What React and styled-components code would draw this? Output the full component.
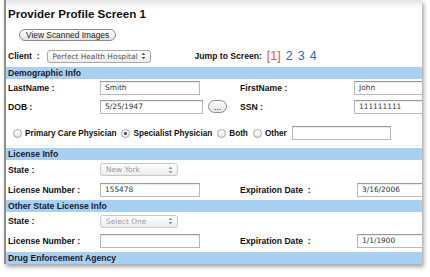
import React from "react";
import styled, { createGlobalStyle } from "styled-components";

const GlobalStyle = createGlobalStyle`
  html, body {
    margin: 0;
    padding: 0;
    background: #ffffff;
  }
  body {
    font-family: "Liberation Sans", Arial, sans-serif;
    color: #111;
  }
`;

export default function App() {
  return (
    <>
      <GlobalStyle />
      <Page>
        <Frame>
          <Header>
            <Title>Provider Profile Screen 1</Title>
            <PillButton wide>View Scanned Images</PillButton>
            <ClientRow>
              <Label>Client&nbsp;&nbsp;:</Label>
              <Select width="104px">Perfect Health Hospital</Select>
              <Jump>
                <Label>Jump to Screen:</Label>
                <ScreenLink current>[1]</ScreenLink>
                <ScreenLink>2</ScreenLink>
                <ScreenLink>3</ScreenLink>
                <ScreenLink>4</ScreenLink>
              </Jump>
            </ClientRow>
          </Header>

          <Bar>Demographic Info</Bar>
          <Row height="17px">
            <Label>LastName :</Label>
            <Input width="100px">Smith</Input>
            <Label>FirstName :</Label>
            <Input grow>John</Input>
          </Row>
          <Row height="21px">
            <Label>DOB :</Label>
            <Cell>
              <Input width="103px">5/25/1947</Input>
              <PillButton>...</PillButton>
            </Cell>
            <Label>SSN :</Label>
            <Input grow>111111111</Input>
          </Row>
          <RadioRow>
            <RadioItem>
              <Radio />
              Primary Care Physician
            </RadioItem>
            <RadioItem>
              <Radio checked />
              Specialist Physician
            </RadioItem>
            <RadioItem>
              <Radio />
              Both
            </RadioItem>
            <RadioItem>
              <Radio />
              Other
            </RadioItem>
            <Input width="99px" />
          </RadioRow>

          <Bar>License Info</Bar>
          <Row height="19px">
            <Label>State :</Label>
            <Select width="78px" disabled>
              New York
            </Select>
          </Row>
          <Row height="21px" wideLabel>
            <Label>License Number :</Label>
            <Input width="100px">155478</Input>
            <Label>Expiration Date&nbsp;&nbsp;:</Label>
            <Input grow>3/16/2006</Input>
          </Row>

          <Bar>Other State License Info</Bar>
          <Row height="18px">
            <Label>State :</Label>
            <Select width="78px" disabled>
              Select One
            </Select>
          </Row>
          <Row height="22px" wideLabel>
            <Label>License Number :</Label>
            <Input width="100px" />
            <Label>Expiration Date&nbsp;&nbsp;:</Label>
            <Input grow>1/1/1900</Input>
          </Row>

          <Bar>Drug Enforcement Agency</Bar>
        </Frame>
      </Page>
    </>
  );
}

function Select({ children, width, disabled }) {
  return (
    <SelectBox width={width} disabled={disabled}>
      <span>{children}</span>
      <svg width="5" height="8" viewBox="0 0 5 8">
        <path d="M0.5 3 L2.5 0.8 L4.5 3 Z" fill="#555" />
        <path d="M0.5 5 L2.5 7.2 L4.5 5 Z" fill="#555" />
      </svg>
    </SelectBox>
  );
}

function Radio({ checked }) {
  return <RadioDot checked={checked} />;
}

const Page = styled.div`
  padding-left: 4px;
  width: 430px;
  height: 277px;
  box-sizing: border-box;
  overflow: hidden;
`;

const Frame = styled.div`
  width: 416px;
  border-left: 2px solid #8f8f8f;
  background: linear-gradient(#e4e4e4 0px, #f4f4f4 5px, #ffffff 8px);
  box-shadow: 2px 3px 4px rgba(0, 0, 0, 0.35);
  overflow: hidden;
`;

const Header = styled.div`
  padding: 7px 0 4px 2px;
  display: flex;
  flex-direction: column;
  align-items: flex-start;
`;

const Title = styled.h1`
  margin: 0;
  font-size: 11.6px;
  font-weight: bold;
  line-height: 14px;
  color: #111;
`;

const PillButton = styled.div`
  display: inline-flex;
  align-items: center;
  justify-content: center;
  box-sizing: border-box;
  height: ${({ wide }) => (wide ? "12px" : "13px")};
  padding: 0 ${({ wide }) => (wide ? "6px" : "5px")};
  margin: ${({ wide }) => (wide ? "8px 0 0 11px" : "0 0 0 5px")};
  border: 1px solid #8a8a8a;
  border-radius: 7px;
  background: linear-gradient(#ffffff, #e2e2e2);
  font-size: 8.4px;
  color: #222;
  white-space: nowrap;
`;

const ClientRow = styled.div`
  display: flex;
  align-items: center;
  margin-top: 8px;
  gap: 7px;
  width: 100%;
`;

const Label = styled.div`
  font-size: 8.6px;
  font-weight: bold;
  color: #111;
  white-space: nowrap;
`;

const Jump = styled.div`
  display: flex;
  align-items: center;
  gap: 5px;
  margin-left: 37px;
`;

const ScreenLink = styled.span`
  font-size: 12.5px;
  color: ${({ current }) => (current ? "#e5553d" : "#2f68b8")};
`;

const Bar = styled.div`
  height: 12px;
  line-height: 12px;
  background: #a8d0f1;
  padding-left: 2px;
  font-size: 8.6px;
  font-weight: bold;
  color: #1a1a2e;
`;

const Row = styled.div`
  display: grid;
  grid-template-columns: 92px 140px ${({ wideLabel }) => (wideLabel ? "117px" : "114px")} 1fr;
  align-items: center;
  height: ${({ height }) => height};
  padding-left: 2px;
`;

const Cell = styled.div`
  display: flex;
  align-items: center;
`;

const Input = styled.div`
  box-sizing: border-box;
  width: ${({ width, grow }) => (grow ? "calc(100% + 4px)" : width)};
  height: 14px;
  line-height: 12px;
  border: 1px solid #b8b8b8;
  border-top-color: #9a9a9a;
  box-shadow: inset 0 1px 1px rgba(0, 0, 0, 0.08);
  background: #fff;
  padding-left: 4px;
  font-family: "DejaVu Sans", Verdana, sans-serif;
  font-size: 7.4px;
  color: #333;
  white-space: nowrap;
  overflow: hidden;
`;

const SelectBox = styled.div`
  box-sizing: border-box;
  width: ${({ width }) => width};
  height: 13px;
  display: flex;
  align-items: center;
  justify-content: space-between;
  padding: 0 4px 0 5px;
  border: 1px solid ${({ disabled }) => (disabled ? "#c8c8c8" : "#a8a8a8")};
  border-radius: 3px;
  background: linear-gradient(#ffffff, #ececec);
  font-family: "DejaVu Sans", Verdana, sans-serif;
  font-size: 7.4px;
  color: ${({ disabled }) => (disabled ? "#9a9a9a" : "#555")};
  white-space: nowrap;

  svg {
    opacity: ${({ disabled }) => (disabled ? 0.6 : 1)};
  }
`;

const RadioRow = styled.div`
  display: flex;
  align-items: center;
  height: 29px;
  padding: 4px 0 0 7px;
  box-sizing: border-box;
  border-bottom: 1px solid #ececec;
  margin-bottom: 2px;
  gap: 5px;
`;

const RadioItem = styled.label`
  display: flex;
  align-items: center;
  gap: 3px;
  font-size: 8.2px;
  font-weight: bold;
  color: #111;
  white-space: nowrap;
`;

const RadioDot = styled.span`
  box-sizing: border-box;
  width: 9px;
  height: 9px;
  border-radius: 50%;
  border: 1px solid #a5a5a5;
  background: ${({ checked }) =>
    checked
      ? "radial-gradient(circle, #555 0 1.3px, #f4f4f4 1.8px)"
      : "linear-gradient(#ffffff, #e6e6e6)"};
`;
